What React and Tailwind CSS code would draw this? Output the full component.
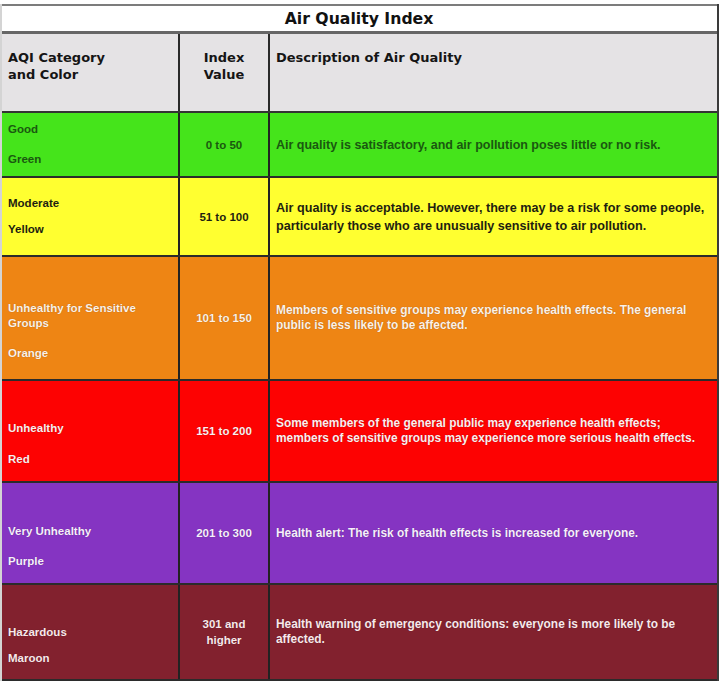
import React from "react";

const rows = [
  {
    name: ["Good"],
    color: "Green",
    range: ["0 to 50"],
    desc: ["Air quality is satisfactory, and air pollution poses little or no risk."],
    bg: "bg-[#45e41b]",
    text: "text-[#1a5810]",
    h: "h-[65px]",
    gap: "gap-[15px]",
    shift: "",
    descFont: "text-[12.5px] leading-[18px]",
  },
  {
    name: ["Moderate"],
    color: "Yellow",
    range: ["51 to 100"],
    desc: [
      "Air quality is acceptable. However, there may be a risk for some people,",
      "particularly those who are unusually sensitive to air pollution.",
    ],
    bg: "bg-[#ffff30]",
    text: "text-[#1e1e10]",
    h: "h-[79px]",
    gap: "gap-[11px]",
    shift: "",
    descFont: "text-[12.6px] leading-[18px]",
  },
  {
    name: ["Unhealthy for Sensitive", "Groups"],
    color: "Orange",
    range: ["101 to 150"],
    desc: [
      "Members of sensitive groups may experience health effects. The general",
      "public is less likely to be affected.",
    ],
    bg: "bg-[#ee8514]",
    text: "text-[#fdf1e6]",
    h: "h-[124px]",
    gap: "gap-[15px]",
    shift: "pt-[26px]",
    descFont: "text-[11.9px] leading-[15px]",
  },
  {
    name: ["Unhealthy"],
    color: "Red",
    range: ["151 to 200"],
    desc: [
      "Some members of the general public may experience health effects;",
      "members of sensitive groups may experience more serious health effects.",
    ],
    bg: "bg-[#fd0202]",
    text: "text-[#fdeeee]",
    h: "h-[102px]",
    gap: "gap-[16px]",
    shift: "pt-[26px]",
    descFont: "text-[11.9px] leading-[15px]",
  },
  {
    name: ["Very Unhealthy"],
    color: "Purple",
    range: ["201 to 300"],
    desc: ["Health alert: The risk of health effects is increased for everyone."],
    bg: "bg-[#8534c2]",
    text: "text-[#f6eefc]",
    h: "h-[102px]",
    gap: "gap-[15px]",
    shift: "pt-[26px]",
    descFont: "text-[11.9px] leading-[15px]",
  },
  {
    name: ["Hazardous"],
    color: "Maroon",
    range: ["301 and", "higher"],
    desc: [
      "Health warning of emergency conditions: everyone is more likely to be",
      "affected.",
    ],
    bg: "bg-[#82212e]",
    text: "text-[#f8e8ea]",
    h: "h-[96px]",
    gap: "gap-[11px]",
    shift: "pt-[26px]",
    descFont: "text-[11.9px] leading-[15px]",
  },
];

export default function App() {
  return (
    <div className="w-[720px] h-[682px] bg-white pt-[4px] overflow-hidden font-['Liberation_Sans',Arial,sans-serif]">
      <div className="w-[719px] border-l-2 border-r-2 border-l-[#d4d4d4] border-r-[#3a3a3a]">
        {/* title */}
        <div className="h-[30px] border-t-2 border-b-[3px] border-t-[#7c7c7c] border-b-[#666] flex items-center justify-center bg-white">
          <span className="font-['DejaVu_Sans',Verdana,sans-serif] font-bold text-[15.7px] text-[#111] pr-[1px]">
            Air Quality Index
          </span>
        </div>

        {/* header */}
        <div className="grid grid-cols-[178px_90px_1fr] h-[79px] border-b-2 border-[#333] bg-[#e5e3e5] font-['DejaVu_Sans',Verdana,sans-serif] font-bold text-[13px] leading-[17px] text-[#151515]">
          <div className="border-r-2 border-[#2a2a2a] pl-[6px] pt-[15px]">
            AQI Category
            <br />
            and Color
          </div>
          <div className="border-r-2 border-[#2a2a2a] pt-[15px] text-center">
            Index
            <br />
            Value
          </div>
          <div className="pl-[6px] pt-[15px]">Description of Air Quality</div>
        </div>

        {rows.map((r) => (
          <div
            key={r.color}
            className={`grid grid-cols-[178px_90px_1fr] border-b-2 border-[#2b2b2b] font-bold ${r.h} ${r.bg} ${r.text} ${
              r.shift ? "[text-shadow:0_0_1px_rgba(0,0,0,0.35)]" : ""
            }`}
          >
            <div className={`border-r-2 border-[#222] pl-[6px] flex flex-col justify-center text-[11.5px] leading-[15px] ${r.gap} ${r.shift}`}>
              <div>
                {r.name.map((n) => (
                  <div key={n}>{n}</div>
                ))}
              </div>
              <div>{r.color}</div>
            </div>
            <div className="border-r-2 border-[#222] flex flex-col items-center justify-center text-center text-[11.5px] leading-[16px]">
              {r.range.map((n) => (
                <div key={n}>{n}</div>
              ))}
            </div>
            <div className={`pl-[6px] flex flex-col justify-center whitespace-nowrap ${r.descFont}`}>
              {r.desc.map((line) => (
                <div key={line}>{line}</div>
              ))}
            </div>
          </div>
        ))}
      </div>
    </div>
  );
}
